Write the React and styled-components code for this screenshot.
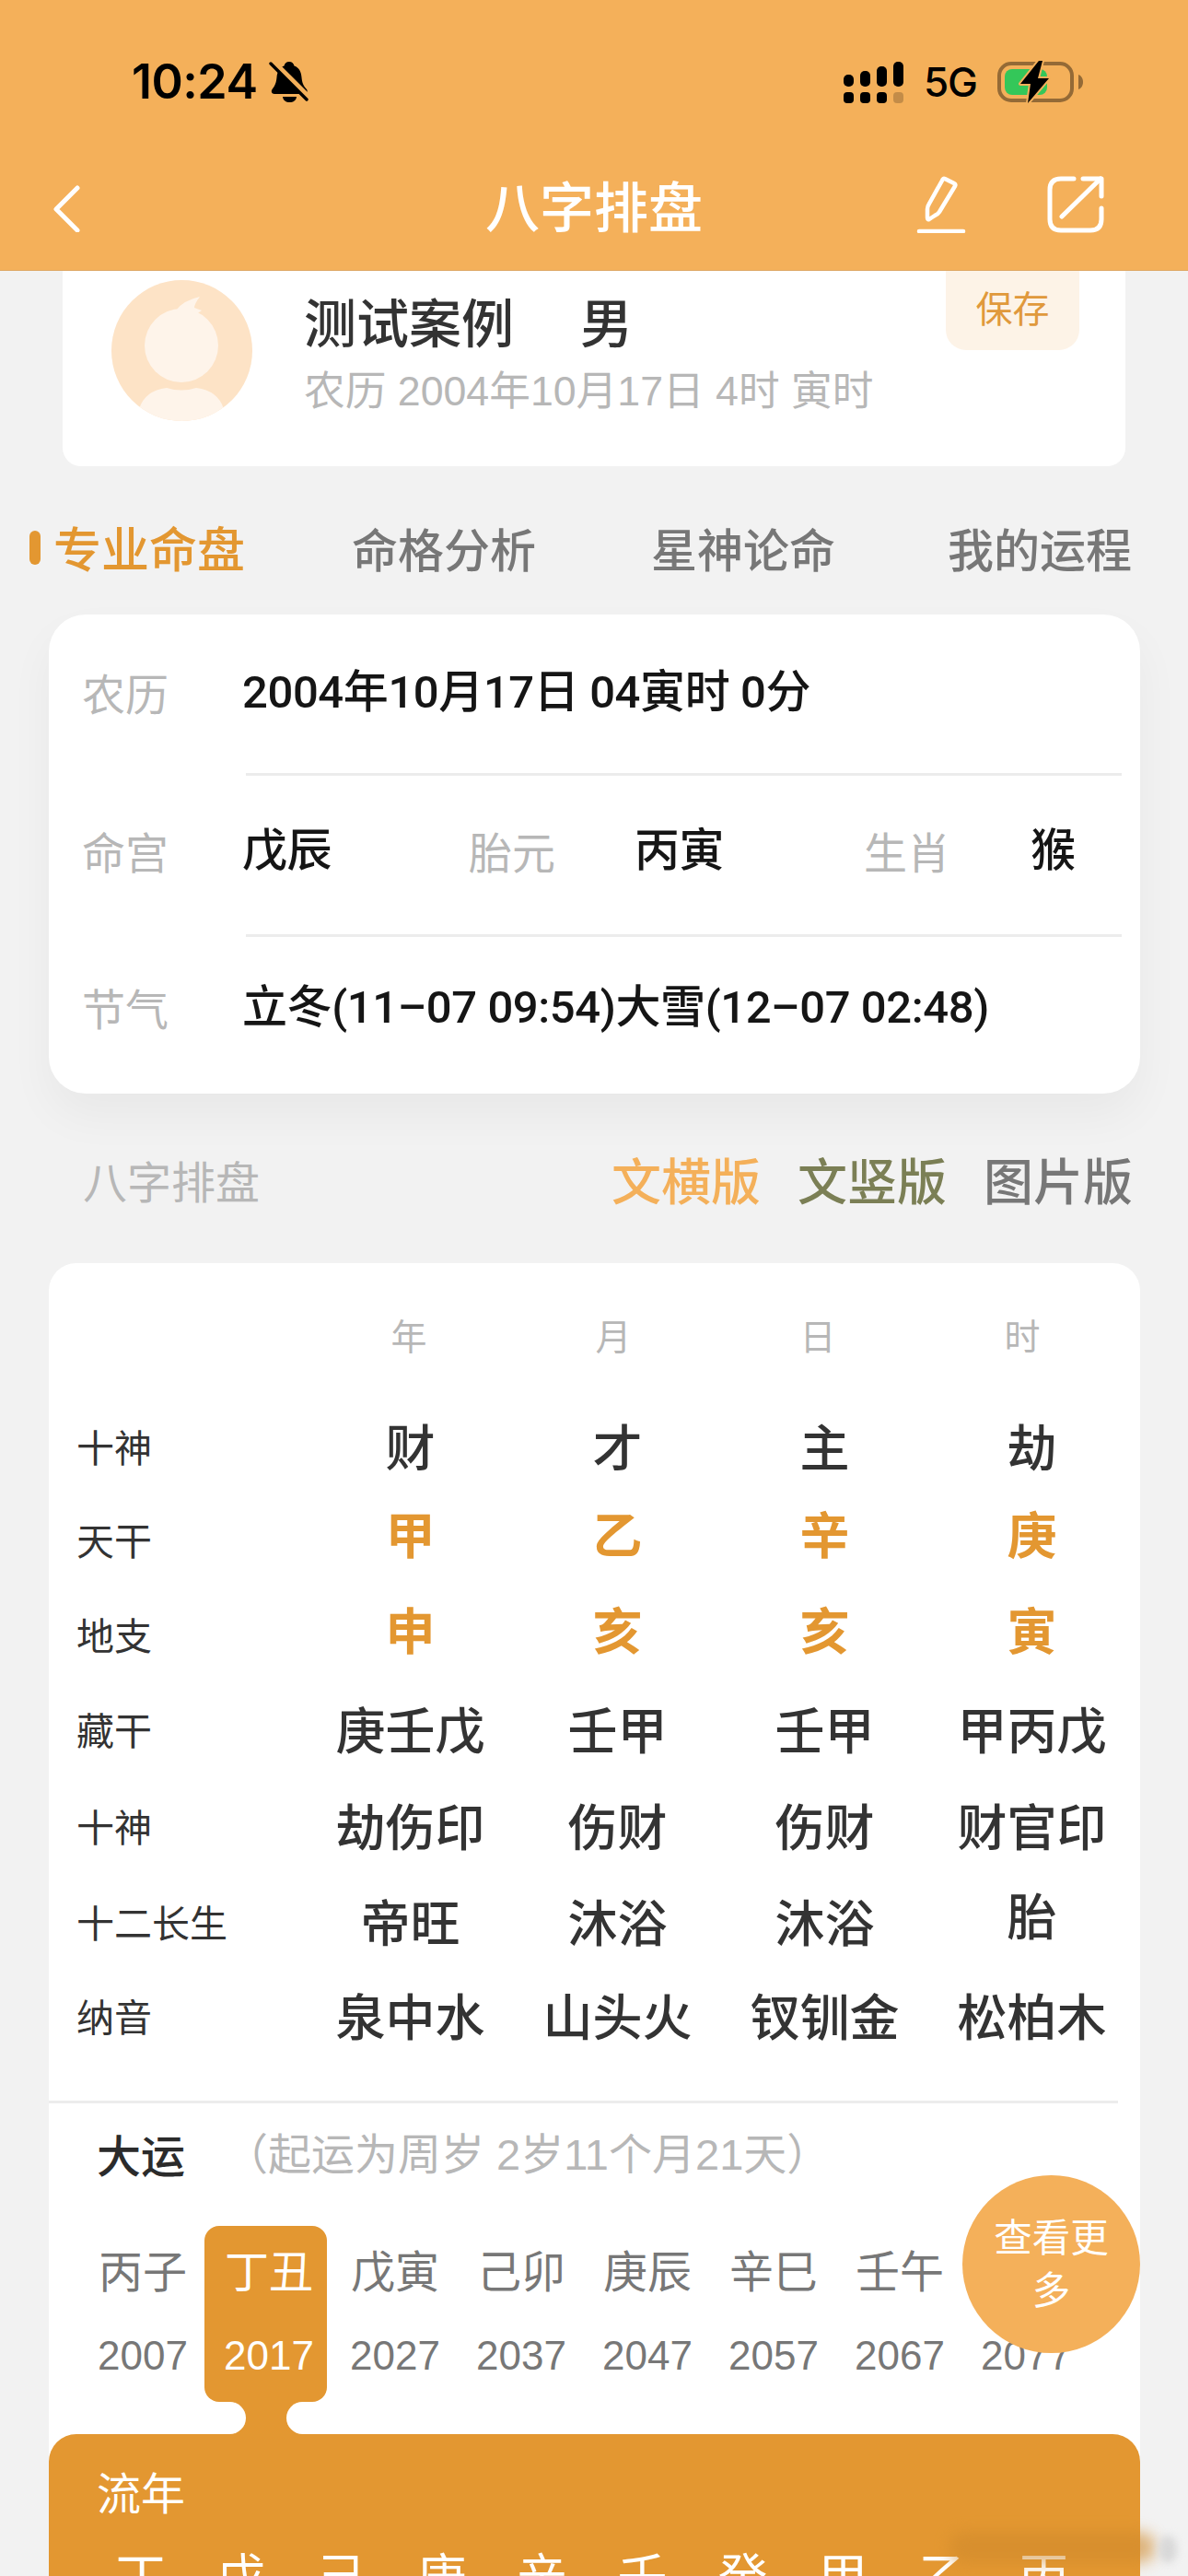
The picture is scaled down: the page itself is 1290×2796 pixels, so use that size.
import React from "react";
import styled, { createGlobalStyle } from "styled-components";

const Global = createGlobalStyle`
  html, body { margin: 0; padding: 0; background: #f2f2f2; }
  * { box-sizing: border-box; }
  body { font-family: "Liberation Sans", "Noto Sans CJK SC", sans-serif; }
`;

const ORANGE = "#e39731";
const LIGHT = "#f4b05a";
const GREY = "#b7b7b7";
const INK = "#333333";

const Page = styled.div`
  position: relative;
  width: 1290px;
  height: 2796px;
  overflow: hidden;
  background: #f2f2f2;
`;
const Header = styled.header`
  height: 294px;
  background: ${LIGHT};
  border-bottom: 1px solid #dea763;
  display: flex;
  flex-direction: column;
`;
const StatusBar = styled.div`
  flex: none;
  height: 150px;
  padding: 64px 113px 36px 143px;
  display: flex;
  align-items: center;
  justify-content: space-between;
`;
const StatusGroup = styled.div`
  display: flex;
  align-items: center;
  gap: ${(p) => p.$gap}px;
`;
const Time = styled.span`
  font: 600 52px/50px Inter, sans-serif;
  color: #000;
  letter-spacing: -0.5px;
`;
const Network = styled.span`
  font: 500 44px/50px Inter, sans-serif;
  color: #000;
  letter-spacing: -1px;
`;
const Nav = styled.nav`
  flex: 1;
  padding: 0 58px;
  display: grid;
  grid-template-columns: 1fr auto 1fr;
  align-items: center;
`;
const Title = styled.h1`
  margin: 0;
  font: 500 59px/70px "Noto Sans CJK SC", sans-serif;
  color: #fff;
`;
const NavActions = styled.div`
  display: flex;
  justify-content: flex-end;
  align-items: center;
  gap: 88px;
  margin-right: 33px;
`;

const ProfileCard = styled.section`
  height: 212px;
  margin: 0 68px;
  padding: 10px 50px 0 53px;
  background: #fff;
  border-radius: 0 0 20px 20px;
  display: flex;
  align-items: flex-start;
`;
const ProfileText = styled.div`
  margin-left: 56px;
  display: flex;
  flex-direction: column;
`;
const Name = styled.div`
  display: flex;
  gap: 72px;
  margin-top: 8px;
  font: 500 57px/70px "Noto Sans CJK SC", sans-serif;
  color: ${INK};
`;
const Sub = styled.div`
  margin-top: 16px;
  font-size: 44.700px;
  line-height: 54px;
  color: ${GREY};
`;
const SaveButton = styled.div`
  margin: -10px 0 0 auto;
  width: 145px;
  height: 86px;
  padding-bottom: 8px;
  border-radius: 0 0 22px 22px;
  background: #fdf3e7;
  color: #e0993c;
  font: 400 40px/78px "Noto Sans CJK SC", sans-serif;
  text-align: center;
`;

const Tabs = styled.div`
  height: 161px;
  padding: 15px 0 0 32px;
  display: flex;
  align-items: center;
`;
const Marker = styled.i`
  width: 12px;
  height: 37px;
  border-radius: 6px;
  background: ${ORANGE};
  margin-right: 14px;
`;
const Tab = styled.div`
  font: 500 ${(p) => (p.$active ? 52 : 50)}px/70px "Noto Sans CJK SC", sans-serif;
  color: ${(p) => (p.$active ? ORANGE : "#777")};
  margin-right: ${(p) => p.$gap}px;
`;

const InfoCard = styled.section`
  height: 520px;
  margin: 0 52px 0 53px;
  padding: 0 20px 0 36px;
  background: #fff;
  border-radius: 40px;
  box-shadow: 0 24px 50px rgba(0, 0, 0, 0.045);
  display: flex;
  flex-direction: column;
`;
const InfoRow = styled.div`
  flex: none;
  height: ${(p) => p.$h}px;
  display: flex;
  align-items: center;
  padding-bottom: ${(p) => p.$pb || 0}px;
`;
const InfoLabel = styled.span`
  width: ${(p) => p.$w}px;
  flex: none;
  padding-bottom: ${(p) => p.$lift || 5}px;
  font: 400 47px/60px "Noto Sans CJK SC", sans-serif;
  color: ${GREY};
`;
const InfoValue = styled.span`
  width: ${(p) => p.$w || "auto"};
  flex: none;
  font-family: Roboto, "Noto Sans CJK SC", sans-serif;
  font-size: 49px;
  font-weight: 500;
  letter-spacing: -0.4px;
  line-height: 60px;
  color: #151515;
  white-space: nowrap;
`;
const Rule = styled.div`
  flex: none;
  height: 3px;
  margin-left: 178px;
  background: #ececec;
`;

const SectionHead = styled.div`
  height: 184px;
  padding: 2px 60px 0 90px;
  display: flex;
  align-items: center;
  justify-content: space-between;
`;
const SectionTitle = styled.div`
  font: 400 48px/60px "Noto Sans CJK SC", sans-serif;
  color: ${GREY};
`;
const Versions = styled.div`
  display: flex;
  gap: 40px;
`;
const Version = styled.span`
  font: 500 54px/70px "Noto Sans CJK SC", sans-serif;
  color: ${(p) => p.$color};
`;

const ChartCard = styled.section`
  position: relative;
  margin: 0 52px 0 53px;
  height: 1500px;
  background: #fff;
  border-radius: 30px;
`;
const HeadRow = styled.div`
  height: 149px;
  padding: 4px 0 0 280px;
  display: grid;
  grid-template-columns: repeat(4, 222px);
  align-items: center;
  font: 400 39px/50px "Noto Sans CJK SC", sans-serif;
  color: ${GREY};
  text-align: center;
`;
const DataRow = styled.div`
  height: ${(p) => p.$h}px;
  padding-left: 30px;
  display: grid;
  grid-template-columns: 250px repeat(4, 225px);
  align-items: center;
`;
const RowLabel = styled.span`
  font: 400 41px/50px "Noto Sans CJK SC", sans-serif;
  color: ${INK};
`;
const Cell = styled.span`
  text-align: center;
  font: ${(p) => (p.$accent ? 700 : 500)} 54px/60px "Noto Sans CJK SC", sans-serif;
  color: ${(p) => (p.$accent ? ORANGE : INK)};
  padding-bottom: ${(p) => p.$lift || 0}px;
`;
const TableEnd = styled.div`
  height: 45px;
  margin-right: 24px;
  border-bottom: 3px solid #ececec;
`;
const LuckHead = styled.div`
  height: 118px;
  padding: 0 0 10px 52px;
  display: flex;
  align-items: center;
`;
const LuckTitle = styled.span`
  font: 500 48px/60px "Noto Sans CJK SC", sans-serif;
  color: #2b2b2b;
`;
const LuckNote = styled.span`
  margin: 4px 0 0 43px;
  font-size: 47px;
  line-height: 60px;
  color: ${GREY};
`;
const LuckSpacer = styled.div`
  height: 15px;
`;
const Luck = styled.div`
  height: 191px;
  padding-left: 32px;
  display: flex;
`;
const LuckTrack = styled.div`
  position: relative;
  isolation: isolate;
  display: flex;
`;
const LuckCol = styled.div`
  position: relative;
  flex: none;
  width: ${(p) => (p.$active ? 133 : 137)}px;
  margin-right: ${(p) => (p.$active ? 4 : 0)}px;
  padding-left: ${(p) => (p.$active ? 7 : 3)}px;
  height: 191px;
  border-radius: 16px;
  background: ${(p) => (p.$active ? ORANGE : "transparent")};
  color: ${(p) => (p.$active ? "#fff" : "#777")};
  display: flex;
  flex-direction: column;
  align-items: center;
`;
const Stem = styled.span`
  margin-top: 16px;
  font: 400 48px/60px "Noto Sans CJK SC", sans-serif;
`;
const Year = styled.span`
  margin-top: 35px;
  font-size: 44px;
  line-height: 60px;
`;
const Neck = styled.div`
  position: absolute;
  top: 170px;
  left: 0;
  width: 133px;
  height: 60px;
  background: linear-gradient(to bottom, transparent 21px, ${ORANGE} 21px);
  z-index: -1;
  &::before, &::after {
    content: "";
    position: absolute;
    top: 21px;
    height: 35px;
    width: 60px;
    background: #fff;
  }
  &::before { left: -15px; border-radius: 0 18px 18px 0; }
  &::after { right: -16px; border-radius: 18px 0 0 18px; }
`;
const MoreButton = styled.div`
  position: absolute;
  left: 992px;
  top: 990px;
  width: 193px;
  height: 193px;
  padding: 37px 22px 0;
  border-radius: 50%;
  background: ${LIGHT};
  color: #fff;
  font: 400 41.500px/57px "Noto Sans CJK SC", sans-serif;
  text-align: center;
`;
const YearPanel = styled.div`
  margin-top: 35px;
  height: 300px;
  border-radius: 30px 30px 0 0;
  background: ${ORANGE};
  color: #fff;
  padding: 31px 0 0 45px;
`;
const PanelTitle = styled.div`
  margin-left: 7px;
  font: 400 48px/60px "Noto Sans CJK SC", sans-serif;
`;
const PanelChars = styled.div`
  margin-top: 31px;
  display: grid;
  grid-template-columns: repeat(10, 109px);
  font: 400 54px/60px "Noto Sans CJK SC", sans-serif;
  text-align: center;
`;
const Smudge = styled.div`
  position: absolute;
  left: 1030px;
  top: 2748px;
  width: 225px;
  height: 34px;
  border-radius: 17px;
  background: #d08a2c;
  opacity: 0.6;
  filter: blur(8px);
`;
const SmudgeEdge = styled.div`
  position: absolute;
  left: 1258px;
  top: 2752px;
  width: 20px;
  height: 30px;
  border-radius: 50%;
  background: #d8d8d8;
  filter: blur(4px);
`;

const Bell = () => (
  <svg width="44" height="46" viewBox="0 0 44 46">
    <path fill="#000" d="M22 1c3 0 5 2 5.500 4.500C33 7.500 35 12 35.500 18c.5 6 2 9 5.500 13 1.500 2 .5 5-2 5H6c-3 0-4-3-2.500-5 3-4 4.500-7 5-13 .5-6 3-10.500 8-12.500C17 3 19 1 22 1z" />
    <path fill="#000" d="M15 39h15c-.500 4-3.500 6-7.500 6s-7-2-7.500-6z" />
    <path stroke={LIGHT} strokeWidth="7" d="M2 -1 L44 41" />
    <path stroke="#000" strokeWidth="3.400" strokeLinecap="round" d="M2 3 L41 42" />
  </svg>
);
const Signal = () => (
  <svg width="65" height="45" viewBox="0 0 65 45">
    {[14, 10, 5, 0].map((y, i) => (
      <rect key={i} x={i * 18} y={y} width="11" height={27 - y} rx="5" fill="#000" />
    ))}
    {[0, 1, 2, 3].map((i) => (
      <rect key={i} x={i * 18} y="33" width="11" height="12" rx="4" fill="#000" opacity={i === 3 ? 0.2 : 1} />
    ))}
  </svg>
);
const Battery = () => (
  <svg width="94" height="46" viewBox="0 0 94 46">
    <rect x="2" y="3" width="79" height="40" rx="13" fill="none" stroke="#946a36" strokeWidth="4" />
    <path d="M88 15c3 1 5 4 5 8s-2 7-5 8z" fill="#946a36" />
    <rect x="8" y="9" width="46" height="28" rx="8" fill="#34c759" />
    <path d="M45 0 L25 25 H36 L33 46 L56 19 H44 L49 0 Z" fill="#000" stroke={LIGHT} strokeWidth="4" paintOrder="stroke" strokeLinejoin="round" />
  </svg>
);
const Back = () => (
  <svg width="30" height="60" viewBox="0 0 30 60" fill="none" stroke="#fff" strokeWidth="5" strokeLinecap="round" strokeLinejoin="round">
    <path d="M26 12 L3 35 L26 58" />
  </svg>
);
const Pen = () => (
  <svg width="54" height="62" viewBox="0 0 54 62" fill="none" stroke="#fff" strokeLinecap="round" strokeLinejoin="round">
    <path strokeWidth="4.500" d="M3 60 H51" />
    <path strokeWidth="4.500" d="M31 3 L41 8 Q43 9 42 11 L25 39 Q23 42 20 43 L14 47 Q12 48 12 45 L12 36 Q12 33 14 30 L28 5 Q29 2 31 3 Z" />
  </svg>
);
const Share = () => (
  <svg width="62" height="62" viewBox="0 0 62 62" fill="none" stroke="#fff" strokeWidth="5" strokeLinecap="round" strokeLinejoin="round">
    <path d="M29 3 H15 Q3 3 3 15 V47 Q3 59 15 59 H47 Q59 59 59 47 V35" />
    <path d="M16 44 L58 3" />
    <path d="M39 3 H59 V22" />
  </svg>
);
const Avatar = () => (
  <svg width="153" height="153" viewBox="0 0 153 153" style={{ flex: "none" }}>
    <defs>
      <clipPath id="av"><circle cx="76.500" cy="76.500" r="76.500" /></clipPath>
    </defs>
    <circle cx="76.500" cy="76.500" r="76.500" fill="#fde3c6" />
    <g fill="#fef4ea" clipPath="url(#av)">
      <circle cx="76" cy="71" r="40" />
      <path d="M70 33 Q78 22 96 18 Q90 26 90 30 L98 33 L88 40 Z" />
      <path d="M30 140 Q36 120 60 117 Q76 122 92 117 Q116 120 122 140 Q100 160 76 153 Q50 160 30 140 Z" />
    </g>
  </svg>
);

const rows = [
  { l: "十神", h: 98, c: ["财", "才", "主", "劫"] },
  { l: "天干", h: 104, a: true, lift: 12, c: ["甲", "乙", "辛", "庚"] },
  { l: "地支", h: 101, a: true, lift: 10, c: ["申", "亥", "亥", "寅"] },
  { l: "藏干", h: 105, c: ["庚壬戊", "壬甲", "壬甲", "甲丙戊"] },
  { l: "十神", h: 105, c: ["劫伤印", "伤财", "伤财", "财官印"] },
  { l: "十二长生", h: 103, c: ["帝旺", "沐浴", "沐浴", "胎"], lifts: [0, 0, 0, 14] },
  { l: "纳音", h: 102, c: ["泉中水", "山头火", "钗钏金", "松柏木"] },
];
const luck = [
  ["丙子", "2007"], ["丁丑", "2017"], ["戊寅", "2027"], ["己卯", "2037"],
  ["庚辰", "2047"], ["辛巳", "2057"], ["壬午", "2067"], ["癸未", "2077"],
];

export default function App() {
  return (
    <Page>
      <Global />
      <Header>
        <StatusBar>
          <StatusGroup $gap={12}>
            <Time>10:24</Time>
            <Bell />
          </StatusGroup>
          <StatusGroup $gap={22}>
            <Signal />
            <Network>5G</Network>
            <Battery />
          </StatusGroup>
        </StatusBar>
        <Nav>
          <Back />
          <Title>八字排盘</Title>
          <NavActions>
            <Pen />
            <Share />
          </NavActions>
        </Nav>
      </Header>

      <ProfileCard>
        <Avatar />
        <ProfileText>
          <Name><span>测试案例</span><span>男</span></Name>
          <Sub>农历 2004年10月17日 4时 寅时</Sub>
        </ProfileText>
        <SaveButton>保存</SaveButton>
      </ProfileCard>

      <Tabs>
        <Marker />
        <Tab $active $gap={116}>专业命盘</Tab>
        <Tab $gap={125}>命格分析</Tab>
        <Tab $gap={122}>星神论命</Tab>
        <Tab $gap={0}>我的运程</Tab>
      </Tabs>

      <InfoCard>
        <InfoRow $h={172} $pb={2}>
          <InfoLabel $w={174} $lift={3}>农历</InfoLabel>
          <InfoValue>2004年10月17日 04寅时 0分</InfoValue>
        </InfoRow>
        <Rule />
        <InfoRow $h={172} $pb={8}>
          <InfoLabel $w={174} $lift={3}>命宫</InfoLabel>
          <InfoValue $w="246px">戊辰</InfoValue>
          <InfoLabel $w={180} $lift={3}>胎元</InfoLabel>
          <InfoValue $w="249px">丙寅</InfoValue>
          <InfoLabel $w={181} $lift={3}>生肖</InfoLabel>
          <InfoValue>猴</InfoValue>
        </InfoRow>
        <Rule />
        <InfoRow $h={170} $pb={16}>
          <InfoLabel $w={174} $lift={3}>节气</InfoLabel>
          <InfoValue>立冬(11–07 09:54)大雪(12–07 02:48)</InfoValue>
        </InfoRow>
      </InfoCard>

      <SectionHead>
        <SectionTitle>八字排盘</SectionTitle>
        <Versions>
          <Version $color={LIGHT}>文横版</Version>
          <Version $color="#7b7f55">文竖版</Version>
          <Version $color="#777">图片版</Version>
        </Versions>
      </SectionHead>

      <ChartCard>
        <HeadRow>
          <span>年</span><span>月</span><span>日</span><span>时</span>
        </HeadRow>
        {rows.map((r, i) => (
          <DataRow key={i} $h={r.h}>
            <RowLabel>{r.l}</RowLabel>
            {r.c.map((c, j) => (
              <Cell key={j} $accent={r.a} $lift={r.lift || (r.lifts && r.lifts[j])}>{c}</Cell>
            ))}
          </DataRow>
        ))}
        <TableEnd />
        <LuckHead>
          <LuckTitle>大运</LuckTitle>
          <LuckNote>（起运为周岁 2岁11个月21天）</LuckNote>
        </LuckHead>
        <LuckSpacer />
        <Luck>
          <LuckTrack>
            {luck.map(([s, y], i) => (
              <LuckCol key={y} $active={i === 1}>
                {i === 1 && <Neck />}
                <Stem>{s}</Stem>
                <Year>{y}</Year>
              </LuckCol>
            ))}
          </LuckTrack>
        </Luck>
        <MoreButton>查看更多</MoreButton>
        <YearPanel>
          <PanelTitle>流年</PanelTitle>
          <PanelChars>
            {"丁戊己庚辛壬癸甲乙丙".split("").map((c) => <span key={c}>{c}</span>)}
          </PanelChars>
        </YearPanel>
      </ChartCard>
      <Smudge />
      <SmudgeEdge />
    </Page>
  );
}
